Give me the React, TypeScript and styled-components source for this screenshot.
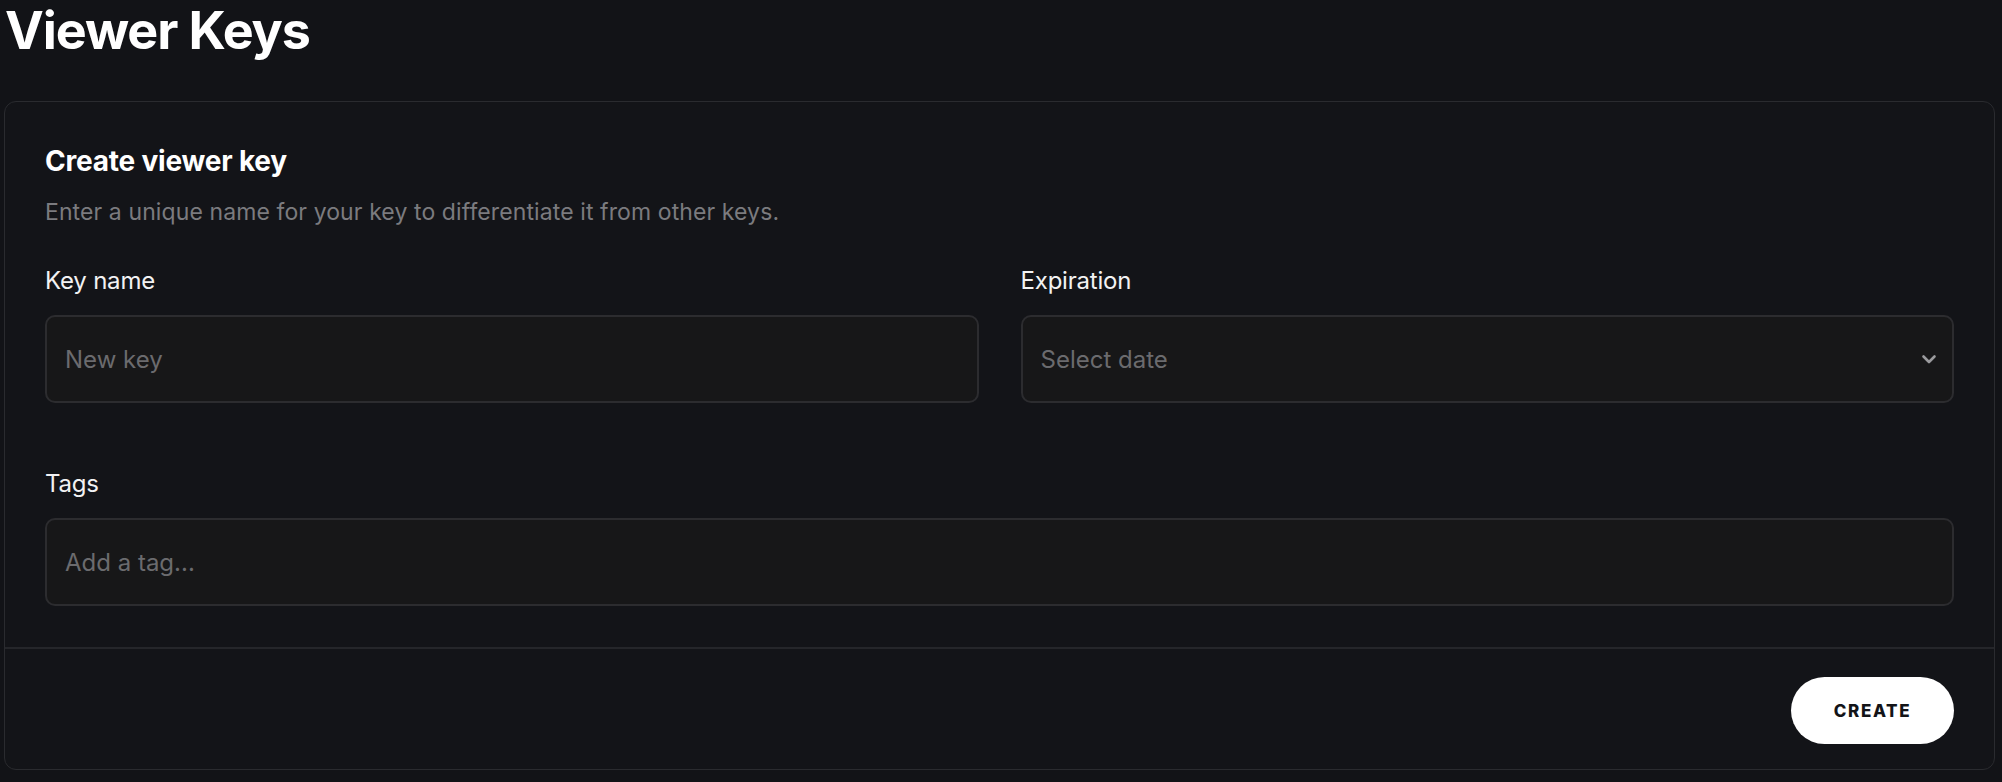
import React from 'react';
import styled, { createGlobalStyle } from 'styled-components';

const GlobalStyle = createGlobalStyle`
  html, body {
    margin: 0;
    padding: 0;
    background: #121317;
  }
  body {
    font-family: Inter, 'Noto Sans', sans-serif;
    color: #ffffff;
  }
`;

// Page shell
const Page = styled.div`
  padding: 0 7px 12px 4px;
`;

const PageTitle = styled.h1`
  margin: 0 0 39px 1px;
  font-size: 52px;
  line-height: 62px;
  font-weight: 700;
  letter-spacing: -1.1px;
  color: #ffffff;
`;

// Card
const Card = styled.section`
  border: 1px solid #2a2b2f;
  border-radius: 12px;
  background: #131418;
`;

const CardBody = styled.div`
  padding: 41px 40px 41px;
`;

const CardTitle = styled.h2`
  margin: 0;
  font-size: 28px;
  line-height: 36px;
  font-weight: 700;
  letter-spacing: -0.2px;
`;

const CardDescription = styled.p`
  margin: 17px 0 0;
  font-size: 23px;
  line-height: 32px;
  color: #7b7b7f;
  letter-spacing: 0.1px;
`;

const FieldRow = styled.div`
  display: grid;
  grid-template-columns: 1fr 1fr;
  gap: 42px;
  margin-top: 37px;
`;

const Field = styled.div<{ $spaced?: boolean }>`
  display: flex;
  flex-direction: column;
  gap: 18px;
  margin-top: ${p => (p.$spaced ? '65px' : '0')};
`;

const Label = styled.label`
  font-size: 24px;
  line-height: 32px;
  color: #f2f2f3;
  letter-spacing: -0.2px;
`;

const inputBox = `
  box-sizing: border-box;
  height: 88px;
  width: 100%;
  border: 2px solid #2c2c2f;
  border-radius: 10px;
  background: #171718;
  padding: 0 18px;
  font-family: Inter, 'Noto Sans', sans-serif;
  font-size: 24px;
`;

const TextInput = styled.input`
  ${inputBox}
  color: #e8e8e8;
  outline: none;
  &::placeholder {
    color: #6b6b6e;
  }
`;

const SelectBox = styled.div`
  ${inputBox}
  display: flex;
  align-items: center;
  justify-content: space-between;
  color: #6b6b6e;
`;

const Chevron = styled.svg`
  width: 16px;
  height: 16px;
  margin-right: -3px;
`;

// Footer
const CardFooter = styled.div`
  display: flex;
  justify-content: flex-end;
  border-top: 2px solid #25262a;
  padding: 28px 40px 25px;
`;

const CreateButton = styled.button`
  height: 67px;
  width: 163px;
  border: none;
  border-radius: 34px;
  background: #ffffff;
  color: #131418;
  font-family: Inter, 'Noto Sans', sans-serif;
  font-size: 17px;
  font-weight: 800;
  letter-spacing: 1.6px;
  cursor: pointer;
`;

const App: React.FC = () => {
  return (
    <>
      <GlobalStyle />
      <Page>
        <PageTitle>Viewer Keys</PageTitle>
        <Card>
          <CardBody>
            <CardTitle>Create viewer key</CardTitle>
            <CardDescription>
              Enter a unique name for your key to differentiate it from other keys.
            </CardDescription>
            <FieldRow>
              <Field>
                <Label>Key name</Label>
                <TextInput placeholder="New key" />
              </Field>
              <Field>
                <Label>Expiration</Label>
                <SelectBox>
                  <span>Select date</span>
                  <Chevron viewBox="0 0 16 16" fill="none">
                    <path d="M2.5 5.5l5.5 5.5 5.5-5.5" stroke="#9a9a9d" strokeWidth="2.6" strokeLinecap="round" strokeLinejoin="round" />
                  </Chevron>
                </SelectBox>
              </Field>
            </FieldRow>
            <Field $spaced>
              <Label>Tags</Label>
              <TextInput placeholder="Add a tag..." />
            </Field>
          </CardBody>
          <CardFooter>
            <CreateButton>CREATE</CreateButton>
          </CardFooter>
        </Card>
      </Page>
    </>
  );
};

export default App;
